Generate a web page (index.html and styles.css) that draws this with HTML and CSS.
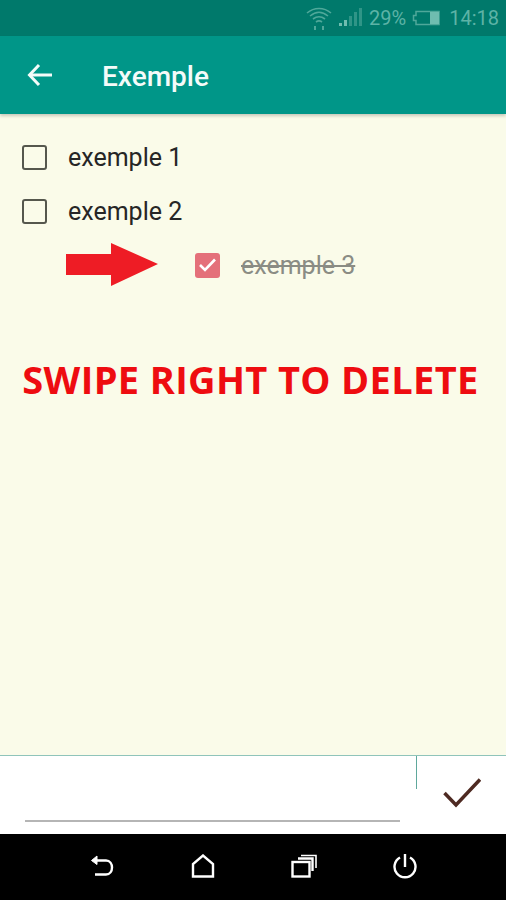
FILE: index.html
```html
<!DOCTYPE html>
<html lang="en">
<head>
    <meta charset="UTF-8">
    <meta name="viewport" content="width=device-width, initial-scale=1.0">
    <title>Exemple</title>
    <link rel="stylesheet" href="styles.css">
</head>
<body>
    <div class="screen">
        <div class="status-bar">
            <svg class="wifi" width="26" height="24" viewBox="0 0 26 24" fill="none" stroke="#4fa89a" stroke-width="1.6">
                <path d="M1 7C8 1 18 1 25 7"/>
                <path d="M4 10C10 5 16 5 22 10"/>
                <path d="M7 13C11 10 15 10 19 13"/>
                <path d="M10 16C12 14.500 14 14.500 16 16"/>
                <path d="M9 20v5M17 20v5" stroke-width="2"/>
            </svg>
            <svg class="signal" width="24" height="20" viewBox="0 0 24 20">
                <rect x="1" y="15" width="3" height="3" fill="#6fbdb0"/>
                <rect x="6" y="12" width="3" height="6" fill="#6fbdb0"/>
                <rect x="11" y="8" width="3" height="10" fill="#2f9587"/>
                <rect x="16" y="4" width="3" height="14" fill="#2f9587"/>
                <rect x="21" y="0" width="3" height="18" fill="#2f9587"/>
            </svg>
            <span class="battery-text">29%</span>
            <svg class="battery" width="28" height="16" viewBox="0 0 28 16">
                <path d="M4 1.500H27V14.500H4V10.500H1.500V5.500H4Z" fill="none" stroke="#4fa89a" stroke-width="1.500"/>
                <rect x="18" y="2" width="9" height="12" fill="#6fbdb0"/>
            </svg>
            <span class="clock">14:18</span>
        </div>
        <header class="app-bar">
            <svg class="back" width="26" height="24" viewBox="0 0 26 24" fill="none" stroke="#f4fbf9" stroke-width="3">
                <path d="M25 12H3"/>
                <path d="M12 2L2.500 12L12 22"/>
            </svg>
            <h1>Exemple</h1>
        </header>
        <main class="content">
            <ul class="todo-list">
                <li class="todo-row">
                    <span class="box"></span>
                    <span class="label">exemple 1</span>
                </li>
                <li class="todo-row">
                    <span class="box"></span>
                    <span class="label">exemple 2</span>
                </li>
                <li class="todo-row swiped">
                    <svg class="arrow" width="92" height="44" viewBox="0 0 92 44">
                        <path d="M0 11H45V0L92 21L45 43V32H0Z" fill="#ee1c25"/>
                    </svg>
                    <span class="box checked">
                        <svg width="19" height="16" viewBox="0 0 19 16" fill="none" stroke="#fff" stroke-width="2.600">
                            <path d="M2 8L7 13L17 2.500"/>
                        </svg>
                    </span>
                    <span class="label done">exemple 3</span>
                </li>
            </ul>
            <p class="hint">SWIPE RIGHT TO DELETE</p>
        </main>
        <div class="input-bar">
            <div class="field-wrap">
                <div class="field-line"></div>
            </div>
            <div class="confirm">
                <svg width="38" height="30" viewBox="0 0 38 30" fill="none" stroke="#4e2a22" stroke-width="3.500">
                    <path d="M1.500 15L13 27L37 1.500"/>
                </svg>
            </div>
        </div>
        <nav class="nav-bar">
            <svg width="26" height="26" viewBox="0 0 26 26" fill="none" stroke="#fff" stroke-width="2.400">
                <path d="M5 7.500H17C25 7.500 25 21.500 17 21.500H6"/>
                <path d="M8 3L2.500 7.500L8 11.500Z" fill="#fff" stroke-width="1"/>
            </svg>
            <svg width="24" height="24" viewBox="0 0 24 24" fill="none" stroke="#fff" stroke-width="2.400">
                <path d="M2 22.500V10L12 1.500L22 10V22.500Z"/>
            </svg>
            <svg width="26" height="24" viewBox="0 0 26 24" fill="none" stroke="#fff" stroke-width="2.400">
                <rect x="1.500" y="8" width="17" height="14.500"/>
                <path d="M7 4.500H21.500V17"/>
                <path d="M10 1.500H25V14" stroke-width="1.600"/>
            </svg>
            <svg width="26" height="26" viewBox="0 0 26 26" fill="none" stroke="#fff" stroke-width="2.400">
                <path d="M7 4.500A10.500 10.500 0 1 0 17 4.500"/>
                <path d="M12 1V14"/>
            </svg>
        </nav>
    </div>
</body>
</html>
```

FILE: styles.css
```css
html, body {
    margin: 0;
    padding: 0;
}
body {
    font-family: Roboto, 'Noto Sans', sans-serif;
    background-color: #000;
}
.screen {
    width: 506px;
    height: 900px;
    display: flex;
    flex-direction: column;
    overflow: hidden;
}
.status-bar {
    height: 36px;
    flex: none;
    background: #00796b;
    display: flex;
    align-items: center;
    justify-content: flex-end;
    padding-right: 7px;
    box-sizing: border-box;
    color: #5db3a6;
    font-size: 20px;
}
.wifi {
    margin-right: 6px;
}
.signal {
    margin-right: 7px;
}
.battery-text {
    margin-right: 6px;
}
.battery {
    margin-right: 9px;
}
.app-bar {
    height: 78px;
    flex: none;
    background: #009688;
    display: flex;
    align-items: center;
    padding-left: 27px;
    box-sizing: border-box;
    box-shadow: 0 2px 3px rgba(0, 0, 0, 0.2);
    position: relative;
}
.app-bar h1 {
    margin: 2px 0 0 49px;
    color: #f4fbf9;
    font-size: 28px;
    font-weight: 500;
}
.content {
    flex: 1;
    background: #fafbe9;
    padding-top: 16px;
}
.todo-list {
    list-style: none;
    margin: 0;
    padding: 0 0 0 22px;
}
.todo-row {
    height: 54px;
    display: flex;
    align-items: center;
}
.box {
    width: 25px;
    height: 25px;
    flex: none;
    box-sizing: border-box;
    border: 2.500px solid #55574d;
    border-radius: 3px;
    display: flex;
    align-items: center;
    justify-content: center;
}
.label {
    margin-left: 21px;
    font-size: 25px;
    color: #262626;
}
.swiped {
    padding-left: 44px;
}
.arrow {
    margin-right: 37px;
    flex: none;
}
.box.checked {
    background: #e4707a;
    border: none;
}
.label.done {
    color: #8a8c84;
    text-decoration: line-through;
}
.hint {
    margin: 61px 0 0;
    padding-right: 5px;
    text-align: center;
    color: #ee0c10;
    font-family: 'Open Sans', sans-serif;
    font-size: 38px;
    font-weight: 700;
    letter-spacing: 0.35px;
    white-space: nowrap;
}
.input-bar {
    height: 79px;
    flex: none;
    background: #fff;
    border-top: 1px solid #8fc4ba;
    display: flex;
    box-sizing: border-box;
}
.field-wrap {
    width: 417px;
    height: 100%;
    display: flex;
    flex-direction: column;
    justify-content: flex-end;
    padding: 0 17px 12px 25px;
    box-sizing: border-box;
}
.field-wrap::before {
    content: "";
    width: 1px;
    height: 33px;
    background: #5fa89c;
    align-self: flex-end;
    margin: 0 -17px auto 0;
}
.field-line {
    height: 2px;
    background: #b5b5b5;
}
.confirm {
    flex: 1;
    display: flex;
    align-items: center;
    justify-content: center;
    padding-bottom: 4px;
}
.nav-bar {
    height: 66px;
    flex: none;
    background: #000;
    display: flex;
    align-items: center;
    justify-content: center;
    gap: 76px;
    padding: 0 0 2px 1px;
    box-sizing: border-box;
}
```
